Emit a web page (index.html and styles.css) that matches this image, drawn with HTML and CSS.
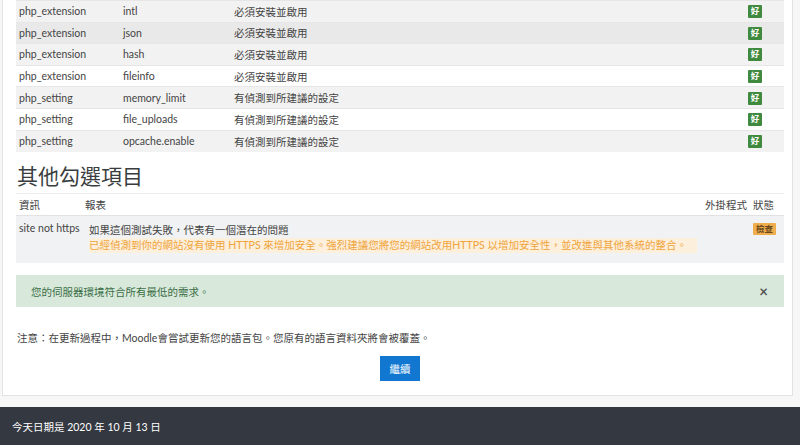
FILE: index.html
```html
<!DOCTYPE html>
<html lang="zh-Hant">
<head>
<meta charset="utf-8">
<link rel="stylesheet" href="styles.css">
</head>
<body>
<div class="page">
  <div class="card">
    <table class="env">
      <colgroup><col class="w1"><col class="w2"><col class="w3"><col class="w4"></colgroup>
      <tbody>
        <tr class="g1"><td>php_extension</td><td>intl</td><td>必須安裝並啟用</td><td class="cs"><span class="badge ok">好</span></td></tr>
        <tr class="g2"><td>php_extension</td><td>json</td><td>必須安裝並啟用</td><td class="cs"><span class="badge ok">好</span></td></tr>
        <tr class="g1"><td>php_extension</td><td>hash</td><td>必須安裝並啟用</td><td class="cs"><span class="badge ok">好</span></td></tr>
        <tr><td>php_extension</td><td>fileinfo</td><td>必須安裝並啟用</td><td class="cs"><span class="badge ok">好</span></td></tr>
        <tr class="g1"><td>php_setting</td><td>memory_limit</td><td>有偵測到所建議的設定</td><td class="cs"><span class="badge ok">好</span></td></tr>
        <tr><td>php_setting</td><td>file_uploads</td><td>有偵測到所建議的設定</td><td class="cs"><span class="badge ok">好</span></td></tr>
        <tr class="g1"><td>php_setting</td><td>opcache.enable</td><td>有偵測到所建議的設定</td><td class="cs"><span class="badge ok">好</span></td></tr>
      </tbody>
    </table>

    <h3 class="title">其他勾選項目</h3>

    <table class="other">
      <colgroup><col class="v1"><col class="v2"><col class="v3"><col class="v4"></colgroup>
      <thead>
        <tr><th>資訊</th><th class="o2h">報表</th><th class="o3">外掛程式</th><th class="o4">狀態</th></tr>
      </thead>
      <tbody>
        <tr class="g3">
          <td class="o1">site not https</td>
          <td class="o2">
            <div>如果這個測試失敗，代表有一個潛在的問題</div>
            <div class="warn">已經偵測到你的網站沒有使用 HTTPS 來增加安全。強烈建議您將您的網站改用HTTPS 以增加安全性，並改進與其他系統的整合。</div>
          </td>
          <td class="o3"></td>
          <td class="o4"><span class="badge check">檢查</span></td>
        </tr>
      </tbody>
    </table>

    <div class="alert">
      <span>您的伺服器環境符合所有最低的需求。</span>
      <span class="close">×</span>
    </div>

    <p class="note">注意：在更新過程中，Moodle會嘗試更新您的語言包。您原有的語言資料夾將會被覆蓋。</p>

    <div class="actions"><button class="btn">繼續</button></div>
  </div>
</div>
<footer class="footer">今天日期是 2020 年 10 月 13 日</footer>
</body>
</html>
```

FILE: styles.css
```css
html, body {
  margin: 0;
  padding: 0;
}
body {
  background: #f7f7f7;
  font-family: "Lato", "Noto Sans CJK TC", sans-serif;
  font-size: 10.5px;
  color: #444;
  width: 800px;
  height: 445px;
  overflow: hidden;
}
.page {
  padding: 0 7px 0 2px;
  height: 407px;
  box-sizing: border-box;
  background: #f7f7f7;
}
.card {
  background: #fff;
  border: 1px solid #e3e3e3;
  border-top: none;
  padding: 0 8px 13px 13px;
  height: 396px;
  box-sizing: border-box;
}
table {
  width: 768px;
  border-collapse: collapse;
  table-layout: fixed;
}
td, th {
  padding: 0 3px;
  text-align: left;
  vertical-align: middle;
  white-space: nowrap;
}
.w1 { width: 104px; }
.w2 { width: 111px; }
.w3 { width: 509px; }
.w4 { width: 44px; }
.env tr {
  height: 21.6px;
}
.env td {
  border-top: 1px solid #e6e6e6;
}
.g1 { background: #f2f2f2; }
.g2 { background: #e9e9e9; }
.g3 { background: #f1f2f3; }
.cs { padding-left: 8px; }
.badge {
  display: inline-block;
  color: #fff;
  font-size: 8.5px;
  line-height: 13px;
  border-radius: 1px;
  font-weight: bold;
  vertical-align: middle;
}
.ok {
  background: #3f8a3f;
  width: 14px;
  text-align: center;
}
.check {
  background: #f0ad4e;
  color: #6a4a1a;
  padding: 0 3px;
  line-height: 12px;
}
.title {
  font-size: 21px;
  font-weight: normal;
  margin: 11px 0 4px 1px;
  line-height: 26px;
  color: #3a3d40;
}
.v1 { width: 67px; }
.v2 { width: 617px; }
.v3 { width: 50px; }
.v4 { width: 34px; }
.other th {
  font-weight: normal;
  height: 21px;
  border-top: 1px solid #ececec;
  border-bottom: 1px solid #e2e2e2;
  vertical-align: middle;
}
.other td {
  vertical-align: top;
  padding-top: 6px;
  height: 48px;
  box-sizing: border-box;
}
.o2h { padding-left: 2px; }
.other td.o2 { padding-left: 6px; }
.o3 { text-align: right; }
.o4 { padding-left: 3px; }
.other td.o4 { padding-top: 6px; }
.warn {
  color: #f0a43a;
  background: #fcefdc;
  width: 608px;
  margin-top: 1px;
  line-height: 15px;
}
.alert {
  margin-top: 12px;
  background: #d8e9db;
  color: #3b6e46;
  height: 32px;
  display: flex;
  align-items: center;
  justify-content: space-between;
  padding: 0 16px 0 15px;
  width: 768px;
  box-sizing: border-box;
}
.close {
  font-size: 15px;
  color: #555;
  font-weight: bold;
}
.note {
  margin: 24px 0 0 1px;
  line-height: 15px;
}
.actions {
  display: flex;
  justify-content: center;
  margin-top: 10px;
}
.btn {
  background: #1177d1;
  color: #fff;
  border: none;
  font-family: inherit;
  font-size: 10.5px;
  width: 40px;
  height: 25px;
  padding: 0;
}
.footer {
  background: #343840;
  color: #fff;
  height: 38px;
  padding-left: 12px;
  display: flex;
  align-items: center;
  font-size: 10.5px;
}
```
